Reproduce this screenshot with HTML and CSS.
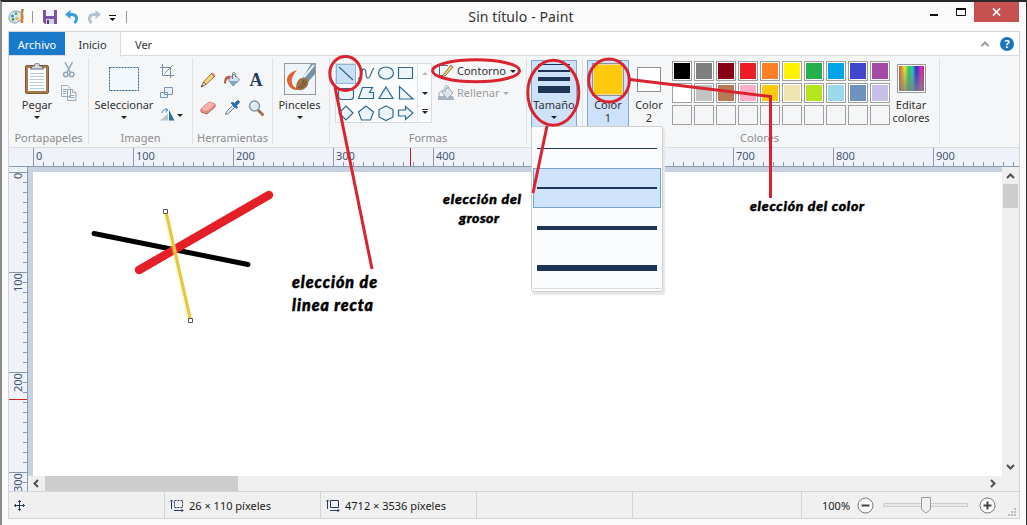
FILE: index.html
```
<!DOCTYPE html>
<html lang="es">
<head>
  <meta charset="UTF-8" />
  <title>Sin título - Paint</title>
  <link rel="stylesheet" href="styles.css">
</head>
<body>
  <div class="window">
    <header class="titlebar">
      <div class="quick">
        <svg class="app-icon" width="18" height="18" viewBox="0 0 18 18">
          <path d="M8 3C3 3 1 7 1 10s3 5 6 5c3 0 2-2 4-2s4-1 4-4-3-6-7-6z" fill="#d5e8ef" stroke="#7597a8"/>
          <circle cx="4.500" cy="8" r="1.500" fill="#3a8fd0"/><circle cx="8" cy="5.700" r="1.400" fill="#63ad45"/>
          <circle cx="5" cy="11.500" r="1.400" fill="#46a04b"/><circle cx="9" cy="10.500" r="1.600" fill="#e7b43a"/>
          <path d="M14 6v9" stroke="#d67b32" stroke-width="2.500"/><path d="M13 1h3l-1 5h-2z" fill="#b98756"/>
        </svg>
        <i class="bar"></i>
        <svg class="save" width="14" height="14" viewBox="0 0 14 14">
          <path d="M0 0h14v14H2l-2-2z" fill="#7953a5"/><path d="M3 0h8v6H3z" fill="#f3effa"/>
          <path d="M3 9h8v5H3z" fill="#d7d2df"/><path d="M4 10h2v4H4z" fill="#563b7a"/>
        </svg>
        <svg class="undo" width="14" height="14" viewBox="0 0 14 14">
          <path d="M2 4.500h5c5 0 6 5 2.500 8.500" fill="none" stroke="#3c9fda" stroke-width="3"/><path d="M5.500 0v9L0 4.500z" fill="#3c9fda"/>
        </svg>
        <svg class="redo" width="14" height="14" viewBox="0 0 14 14">
          <path d="M12 4.500H7c-5 0-6 5-2.500 8.500" fill="none" stroke="#b4c1cf" stroke-width="3"/><path d="M8.500 0v9L14 4.500z" fill="#b4c1cf"/>
        </svg>
        <svg class="more" width="8" height="7" viewBox="0 0 8 7"><path d="M0 .5h7" stroke="#111"/><path d="M.5 3h6L3.500 6z" fill="#111"/></svg>
        <i class="bar"></i>
      </div>
      <h1>Sin título - Paint</h1>
      <div class="controls">
        <svg width="38" height="20" viewBox="0 0 38 20"><path d="M1 13h8" stroke="#111" stroke-width="2"/><path d="M27.500 7v6.500h9V7z" fill="none" stroke="#111"/><path d="M27 7h10" stroke="#111" stroke-width="2"/></svg>
        <span class="close"><svg width="9" height="8" viewBox="0 0 9 8"><path d="M1 .5l7 7M8 .5l-7 7" stroke="#fff" stroke-width="1.700"/></svg></span>
      </div>
    </header>

    <div class="client">
      <nav class="tabs">
        <span class="tab file">Archivo</span>
        <span class="tab active">Inicio</span>
        <span class="tab">Ver</span>
        <svg class="collapse" width="10" height="8" viewBox="0 0 10 8"><path d="M1.500 6L5 2.500 8.500 6" fill="none" stroke="#999" stroke-width="2"/></svg>
        <span class="help">?</span>
      </nav>

      <div class="ribbon">
        <section class="group clipboard">
          <div class="tools">
            <div class="big paste">
              <svg width="26" height="32" viewBox="0 1 26 32">
                <rect x="1.500" y="3.500" width="23" height="28" rx="1.500" fill="#a9794a" stroke="#7f5a36"/>
                <rect x="4" y="6" width="18" height="23" fill="#fbfdff"/>
                <path d="M6 11.500h14M6 14.500h14M6 17.500h14M6 20.500h14M6 23.500h14M6 26.500h14" stroke="#b6cbdb"/>
                <path d="M6.500 7l2-3h2c0-4 5-4 5 0h2l2 3z" fill="#d7dade" stroke="#63676d"/>
              </svg>
              <span>Pegar</span><i class="arrow"></i>
            </div>
            <div class="small">
              <svg width="16" height="16" viewBox="0 0 16 16" fill="none" stroke="#95a7bd" stroke-width="1.500"><path d="M4 0l5.500 10.500M11.500 0L6 10.500"/><circle cx="4.800" cy="12.500" r="2.200"/><circle cx="10.700" cy="12.500" r="2.200"/></svg>
              <svg width="16" height="16" viewBox="0 0 16 16" fill="#f1f5fa" stroke="#9aabc0"><path d="M.5.500h6l3 3v8h-9zM6.500 4.500h5l3.500 3v8H6.500z"/><path d="M11.500 4.500v3H15M2 4.500h4M2 6.500h3M2 8.500h3M8.500 10.500h5M8.500 12.500h5"/></svg>
            </div>
          </div>
          <h2>Portapapeles</h2>
        </section>

        <section class="group image">
          <div class="tools">
            <div class="big">
              <svg width="32" height="32" viewBox="0 0 32 32"><rect x="1.500" y="4.500" width="29" height="23" fill="#f3f8fd" stroke="#28648f" stroke-dasharray="2 1"/></svg>
              <span>Seleccionar</span><i class="arrow"></i>
            </div>
            <div class="small">
              <svg width="14" height="14" viewBox="0 0 14 14" fill="none" stroke="#7890aa"><path d="M2.500 0v11.500H14M0 3.500h10.500V14M4.500 9.500L13 1"/></svg>
              <svg width="14" height="14" viewBox="0 0 14 14" fill="#e5f0fa" stroke="#7c96b0"><path d="M.5 6.500h7v5h-7zM4.500 1.500h8v7h-8z"/></svg>
              <div class="rotate">
                <svg width="15" height="14" viewBox="0 0 15 14"><path d="M0 12.500L8 6v6.500z" fill="#bac1c7"/><path d="M9 2v10.500h5.500z" fill="#28749e"/><path d="M2 5c0-3 3-4 5-3M5.500 0L8 2 5.500 4" fill="none" stroke="#4a89c0"/></svg>
                <i class="arrow"></i>
              </div>
            </div>
          </div>
          <h2>Imagen</h2>
        </section>

        <section class="group toolbox">
          <div class="tools grid">
            <svg viewBox="0 0 16 16"><path d="M3.500 10L12 1l3 3-9 8.500z" fill="#f4d777" stroke="#9c7538"/><path d="M11 2l1.500-1.500L15.500 3 14 5z" fill="#d58467"/><path d="M3.500 10L1 15l5-2.500z" fill="#ecd3a3" stroke="#5c5340" stroke-width=".7"/><path d="M1 15l1-2 1 1z" fill="#222"/></svg>
            <svg viewBox="0 0 16 16"><path d="M4.500 8L10 2l5.500 6L9 14z" fill="#cfe2f0" stroke="#6f8da6"/><path d="M5.500 9h9L9 14z" fill="#83a9c9"/><path d="M8.500 7V1.500c0-1.500 3-1.500 3 1V5" fill="none" stroke="#777"/><path d="M7 4C3 3 0 5 0 11l2 1c0-4 1-5 3-5z" fill="#c25945"/></svg>
            <b class="letter">A</b>
            <svg viewBox="0 0 16 16"><path d="M1 9l8-7 6 2v3l-8 7-6-2z" fill="#e5908c" stroke="#bd6862"/><path d="M1 9l6 2 8-7-6-2z" fill="#f3b4ad"/><path d="M7 11v3" stroke="#c76f6d"/></svg>
            <svg viewBox="0 0 16 16"><path d="M1.500 14.500l1-3 6-6 2 2-6 6z" fill="#dceaf5" stroke="#708698"/><path d="M7 3l2-.5 1.500 1L13 1c2-1 3 1 2 2l-2.500 2.500 1 2-1 1z" fill="#2c70ae" stroke="#2c70ae"/></svg>
            <svg viewBox="0 0 16 16"><path d="M10 10l4.500 4.500" stroke="#9b735b" stroke-width="3" stroke-linecap="round"/><circle cx="6.500" cy="6" r="5" fill="#d8eaf6" stroke="#8998a5" stroke-width="1.500"/><path d="M4 6c0-2 1-3 3-3" stroke="#fff" fill="none"/></svg>
          </div>
          <h2>Herramientas</h2>
        </section>

        <section class="group brushes">
          <div class="tools">
            <div class="big">
              <svg width="32" height="32" viewBox="0 0 32 32">
                <rect x=".5" y=".5" width="31" height="31" fill="#edf4fa" stroke="#949a9f"/>
                <path d="M13 7C5 9 1 15 4 21c3 7 10 7 15 4-5 1-10 0-11-5-1-4 1-8 5-13z" fill="#e3622f"/>
                <path d="M31 1v10l-7 8-5-5L27 1z" fill="#7991a6"/><path d="M30 2L20 14" stroke="#e9f0f6" stroke-width="2"/>
                <path d="M12 26c0-7 3-12 9-11 6 2 3 9-1 11-3 2-6 1-8 0z" fill="#9b7146"/><path d="M14 25c3-1 5-4 6-8M17 25c3-1 4-4 5-7" stroke="#6e4a2a" fill="none"/>
              </svg>
              <span>Pinceles</span><i class="arrow"></i>
            </div>
          </div>
        </section>

        <section class="group shapes">
          <div class="tools">
            <div class="gallery">
              <div class="shape-list">
                <svg class="selected" viewBox="0 0 20 20"><path d="M3 3l14 13"/></svg>
                <svg viewBox="0 0 20 20"><path d="M2 15C6 14 5 4 8 5c4 1 0 9 4 9 3 0 3-8 6-10" fill="none"/></svg>
                <svg viewBox="0 0 20 20"><ellipse cx="10" cy="9" rx="7.500" ry="6"/></svg>
                <svg viewBox="0 0 20 20"><path d="M2.500 3.500h14v11h-14z"/></svg>
                <svg viewBox="0 0 20 20"><rect x="2.500" y="4.500" width="15" height="11" rx="3"/></svg>
                <svg viewBox="0 0 20 20"><path d="M6.500 3.500h10l-3 5h4v6h-15z"/></svg>
                <svg viewBox="0 0 20 20"><path d="M10 3l7 11.500H3z"/></svg>
                <svg viewBox="0 0 20 20"><path d="M3.500 2.500v12.500H17z"/></svg>
                <svg viewBox="0 0 20 20"><path d="M10 2l7 7-7 7-7-7z"/></svg>
                <svg viewBox="0 0 20 20"><path d="M10 2l7.500 6-3 8h-9l-3-8z"/></svg>
                <svg viewBox="0 0 20 20"><path d="M10 2l7 3.500V13l-7 3.500L3 13V5.500z"/></svg>
                <svg viewBox="0 0 20 20"><path d="M2.500 6h7V2.500L17 9l-7.500 6.500V12h-7z"/></svg>
              </div>
              <div class="scroller"><i class="arrow up"></i><i class="arrow"></i><i class="arrow last"></i></div>
            </div>
            <div class="options">
              <div class="option">
                <svg width="16" height="16" viewBox="0 0 16 16"><path d="M10 2.500H1.500v10H5" fill="none" stroke="#416d9b"/><path d="M5 12l8-10 2 2-8 9-3 1z" fill="#f1d070" stroke="#8f7242"/></svg>
                <span>Contorno</span><i class="arrow"></i>
              </div>
              <div class="option disabled">
                <svg width="16" height="16" viewBox="0 0 16 16"><path d="M0 11h15l1 4H0z" fill="#a9b4c0"/><path d="M4 7l6-5 5 6-6 6z" fill="#dfe5eb" stroke="#9aa7b5"/><path d="M7 7V2c0-2 3-2 3 0v2M5 5L1 8v4" fill="none" stroke="#9aa7b5"/></svg>
                <span>Rellenar</span><i class="arrow"></i>
              </div>
            </div>
          </div>
          <h2>Formas</h2>
        </section>

        <section class="group size">
          <div class="tools">
            <div class="size-button">
              <i class="w1"></i><i class="w2"></i><i class="w3"></i><i class="w4"></i>
              <span>Tamaño</span><i class="arrow"></i>
              <div class="size-menu">
                <div class="size-item"><i class="w1"></i></div>
                <div class="size-item hover"><i class="w2"></i></div>
                <div class="size-item"><i class="w3"></i></div>
                <div class="size-item"><i class="w4"></i></div>
              </div>
            </div>
          </div>
        </section>

        <section class="group colors">
          <div class="tools">
            <div class="color-button chosen"><i></i><span>Color<br>1</span></div>
            <div class="color-button second"><i></i><span>Color<br>2</span></div>
            <div class="palette" id="palette"></div>
            <div class="edit"><i></i><span>Editar<br>colores</span></div>
          </div>
          <h2>Colores</h2>
        </section>
      </div>

      <div class="ruler-x">
        <span>0</span><span>100</span><span>200</span><span>300</span><span>400</span><span>500</span><span>600</span><span>700</span><span>800</span><span>900</span>
        <i class="marker"></i>
      </div>

      <div class="workspace">
        <div class="ruler-y">
          <span>0</span><span>100</span><span>200</span><span>300</span>
          <i class="marker"></i>
        </div>
        <div class="view">
          <main class="canvas">
            <svg width="300" height="200" viewBox="33 172 300 200">
              <path d="M94 233.500l154 31" stroke="#000" stroke-width="5" stroke-linecap="round"/>
              <path d="M139 270l130-75" stroke="#e41f27" stroke-width="8.500" stroke-linecap="round"/>
              <path d="M166 214l24 106" stroke="#ffe94a" stroke-opacity=".35" stroke-width="5"/>
              <path d="M166 212l24.500 108" stroke="#e4c645" stroke-width="3"/>
              <path d="M163.500 209.500h4v4h-4zM188.500 318.500h4v4h-4z" fill="#fff" stroke="#555"/>
            </svg>
          </main>
          <div class="scroll-x">
            <svg width="8" height="9" viewBox="0 0 8 9"><path d="M6 1L2.500 4.500 6 8" fill="none" stroke="#505050" stroke-width="2"/></svg>
            <i class="thumb"></i>
            <svg width="8" height="9" viewBox="0 0 8 9"><path d="M2 1l3.500 3.500L2 8" fill="none" stroke="#505050" stroke-width="2"/></svg>
          </div>
        </div>
        <div class="scroll-y">
          <svg width="9" height="8" viewBox="0 0 9 8"><path d="M1 6l3.500-3.500L8 6" fill="none" stroke="#505050" stroke-width="2"/></svg>
          <i class="thumb"></i>
          <svg width="9" height="8" viewBox="0 0 9 8"><path d="M1 2l3.500 3.500L8 2" fill="none" stroke="#505050" stroke-width="2"/></svg>
        </div>
      </div>

      <footer class="status">
        <div class="cell pos"><svg width="11" height="11" viewBox="0 0 11 11"><path d="M5.500 0v11M0 5.500h11M4 2l1.500-1.500L7 2M4 9l1.500 1.500L7 9M2 4L.5 5.500 2 7M9 4l1.500 1.500L9 7" fill="none" stroke="#263b5e"/></svg></div>
        <div class="cell"><svg width="14" height="13" viewBox="0 0 14 13" fill="none" stroke="#263b5e"><path d="M4.500 1.500h8v7h-8z" stroke-dasharray="2 1"/><path d="M1.500 10V1M0 2.500L1.500 1 3 2.500M4 11.500h9M11.500 10l1.500 1.500-1.500 1.500"/></svg><span>26 × 110 píxeles</span></div>
        <div class="cell"><svg width="14" height="13" viewBox="0 0 14 13" fill="none" stroke="#263b5e"><path d="M4.500 1.500h8v7h-8z"/><path d="M1.500 10V1M0 2.500L1.500 1 3 2.500M4 11.500h9M11.500 10l1.500 1.500-1.500 1.500"/></svg><span>4712 × 3536 píxeles</span></div>
        <div class="cell empty"></div>
        <div class="zoom">
          <span>100%</span>
          <svg width="17" height="17" viewBox="0 0 17 17"><circle cx="8.500" cy="8.500" r="7.500" fill="#fafafa" stroke="#777"/><path d="M4.500 8.500h8" stroke="#444" stroke-width="2"/></svg>
          <svg class="slider" width="86" height="17" viewBox="0 0 86 17"><path d="M.5 6.500h84v3H.5z" fill="#e8e8e8" stroke="#ccc"/><path d="M38.500.500h9v12L43 16l-4.500-3.500z" fill="#f0f0f0" stroke="#999"/></svg>
          <svg width="17" height="17" viewBox="0 0 17 17"><circle cx="8.500" cy="8.500" r="7.500" fill="#fafafa" stroke="#777"/><path d="M4.500 8.500h8M8.500 4.500v8" stroke="#444" stroke-width="2"/></svg>
          <svg class="grip" width="9" height="9" viewBox="0 0 9 9"><path d="M6 0h2v2H6zM6 3h2v2H6zM3 3h2v2H3zM6 6h2v2H6zM3 6h2v2H3zM0 6h2v2H0z" fill="#bdbdbd"/></svg>
        </div>
      </footer>
    </div>

    <svg class="notes" width="1027" height="525" viewBox="0 0 1027 525">
      <g class="pen">
        <ellipse cx="345.500" cy="73.500" rx="15.700" ry="17"/>
        <path d="M335 87l37 182"/>
        <ellipse cx="476" cy="70.700" rx="43.500" ry="11"/>
        <ellipse cx="553.300" cy="92.700" rx="25.500" ry="32.500"/>
        <path d="M547 126l-14 67"/>
        <ellipse cx="609" cy="80.500" rx="20.300" ry="21.500"/>
        <path d="M630 79.500l140.500 17V198"/>
      </g>
      <g class="hand">
        <text class="large" x="292" y="288" textLength="85">elección de</text>
        <text class="large" x="292" y="311" textLength="81">linea recta</text>
        <text x="443" y="204" textLength="78">elección del</text>
        <text x="459" y="223" textLength="40">grosor</text>
        <text x="750" y="211" textLength="114">elección del color</text>
      </g>
    </svg>
  </div>

  <script>
    const COLORS = [
      "#000000", "#7f7f7f", "#880015", "#ed1c24", "#ff7f27", "#fff200", "#22b14c", "#00a2e8", "#3f48cc", "#a349a4",
      "#ffffff", "#c3c3c3", "#b97a57", "#ffaec9", "#ffc90e", "#efe4b0", "#b5e61d", "#99d9ea", "#7092be", "#c8bfe7"
    ];
    const palette = document.getElementById("palette");

    for (let i = 0; i < 30; i++) {
      const swatch = document.createElement("i");
      if (COLORS[i]) {
        swatch.style.backgroundColor = COLORS[i];
      } else {
        swatch.className = "free";
      }
      palette.appendChild(swatch);
    }
  </script>
</body>
</html>
```
FILE: styles.css
```
* {
  box-sizing: border-box;
}

body {
  margin: 0;
  font-family: "Noto Sans", "Open Sans", sans-serif;
  font-size: 11px;
  color: #333;
  overflow: hidden;
}

svg {
  display: block;
  flex: none;
}

i {
  display: block;
  flex: none;
}

.window {
  position: relative;
  width: 1027px;
  height: 525px;
  padding: 0 7px 0 6px;
  background: #fbfbfb;
  border: solid #2b292c;
  border-width: 2px 1px 0 2px;
  border-left-color: #8b8b8b;
}

/* title bar */
.titlebar {
  display: flex;
  height: 29px;
  justify-content: space-between;
}

.quick {
  display: flex;
  align-items: center;
  width: 130px;
}

.bar {
  width: 1px;
  height: 12px;
  background: #999;
}

.app-icon {
  margin-right: 6px;
}

.save {
  margin-left: 10px;
}

.undo {
  margin-left: 8px;
}

.redo {
  margin-left: 8px;
}

.more {
  margin: 4px 9px 0 8px;
}

h1 {
  margin: 0 25px 0 0;
  font-size: 14px;
  font-weight: 400;
  line-height: 29px;
  letter-spacing: 0.100px;
}

.controls {
  display: flex;
  width: 90px;
}

.close {
  display: flex;
  align-items: center;
  justify-content: center;
  width: 45px;
  height: 20px;
  margin-left: 7px;
  background: #c75050;
}

.client {
  width: 1012px;
  border: 1px solid #d3d4d6;
}

/* tabs */
.tabs {
  display: flex;
  height: 24px;
  background: #fff;
  border-bottom: 1px solid #dadbdc;
  align-items: center;
}

.tab {
  height: 23px;
  padding: 0 14px;
  line-height: 25px;
}

.file {
  width: 56px;
  padding: 0;
  text-align: center;
  background: #1979ca;
  color: #fff;
}

.active {
  width: 56px;
  height: 25px;
  margin-top: 1px;
  padding: 0;
  text-align: center;
  background: #f5f6f7;
  border-right: 1px solid #dadbdc;
}

.collapse {
  margin-left: auto;
}

.help {
  width: 14px;
  height: 14px;
  margin: 0 5px 0 10px;
  border-radius: 50%;
  background: #1c74bd;
  color: #fff;
  font-weight: 700;
  line-height: 14px;
  text-align: center;
}

/* ribbon */
.ribbon {
  display: flex;
  height: 91px;
  padding: 2px 0 3px;
  background: #f5f6f7;
}

.group {
  display: flex;
  flex-direction: column;
  flex: none;
  border-right: 1px solid #e0e1e3;
}

.tools {
  display: flex;
  height: 71px;
}

h2 {
  margin: 0;
  height: 14px;
  font-size: 11px;
  font-weight: 400;
  line-height: 18px;
  text-align: center;
  color: #8b8c8e;
}

.clipboard { width: 80px; }
.image { width: 104px; }
.toolbox { width: 80px; }
.brushes { width: 57px; }
.shapes { width: 197px; }
.size { width: 56px; }
.colors { width: 357px; }

.arrow {
  width: 0;
  height: 0;
  border: 3px solid transparent;
  border-top-color: #222;
  border-bottom: 0;
}

.arrow.up {
  border-top: 0;
  border-bottom: 3px solid #bbb;
}

.big {
  display: flex;
  flex-direction: column;
  align-items: center;
  width: 54px;
  padding-top: 5px;
}

.big span {
  line-height: 20px;
}

.big .arrow {
  margin-top: 1px;
}

.paste {
  width: 56px;
}

.small {
  display: flex;
  flex-direction: column;
}

.clipboard .small {
  gap: 7px;
  margin-left: -4px;
  padding-top: 4px;
}

.image .big {
  width: 70px;
}

.image .small {
  gap: 8px;
  padding: 6px 0 0 1px;
}

.rotate {
  display: flex;
  align-items: center;
  gap: 2px;
}

.grid {
  display: grid;
  grid-template-columns: 16px 16px 16px;
  grid-auto-rows: 16px;
  gap: 12px 8px;
  padding: 14px 0 0 7px;
}

.letter {
  font: 700 18px/16px "Liberation Serif", serif;
  color: #1f3c5f;
  text-align: center;
}

.brushes .big {
  width: 53px;
}

.gallery {
  display: flex;
  width: 97px;
  height: 60px;
  margin: 5px 0 0 5px;
  background: #fbfcfe;
  border: 1px solid #dadbdd;
}

.shape-list {
  display: grid;
  grid-template-columns: repeat(4, 20px);
  grid-auto-rows: 20px;
  width: 81px;
  height: 60px;
}

.shape-list svg {
  fill: #edf6fc;
  stroke: #31678f;
  stroke-width: 1.200;
}

.shape-list .selected {
  background: #c9e0f7;
  box-shadow: inset 0 0 0 1px #8fb6da;
}

.scroller {
  display: flex;
  flex: 1;
  flex-direction: column;
  align-items: center;
  justify-content: space-between;
  padding: 8px 0;
  border-left: 1px solid #e3e4e6;
}

.scroller .last {
  position: relative;
}

.scroller .last::before {
  content: "";
  position: absolute;
  top: -5px;
  left: -3px;
  width: 6px;
  height: 1px;
  background: #333;
}

.options {
  display: flex;
  flex-direction: column;
  gap: 6px;
  padding: 5px 0 0 6px;
}

.option {
  display: flex;
  align-items: center;
  height: 16px;
}

.option span {
  margin: -1px 4px 0 3px;
}

.disabled {
  color: #9a9b9d;
}

.disabled .arrow {
  border-top-color: #aaa;
}

/* line size */
.size-button {
  position: relative;
  display: flex;
  flex-direction: column;
  align-items: center;
  width: 46px;
  height: 67px;
  margin: 2px 0 0 4px;
  padding-top: 3px;
  background: #cde2f9;
  border: 1px solid #7fabd0;
}

.size-button > .w1,
.size-button > .w2,
.size-button > .w3,
.size-button > .w4 {
  width: 32px;
  margin-bottom: 5px;
}

.w1 { height: 1px; background: #1d3557; }
.w2 { height: 2px; background: #1d3557; }
.w3 { height: 4px; background: #1d3557; }
.w4 { height: 7px; background: #1d3557; }

.size-button > .w4 {
  margin-bottom: 2px;
}

.size-button span {
  line-height: 20px;
}

.size-button > .arrow {
  margin-top: 1px;
}

.size-menu {
  position: absolute;
  z-index: 1;
  top: 65px;
  left: -1px;
  width: 132px;
  height: 166px;
  padding: 1px;
  background: #fbfcfe;
  border: 1px solid #cdced0;
  border-radius: 2px;
  box-shadow: 2px 3px 1px #e7e7e8;
}

.size-menu::after {
  content: "";
  display: block;
  height: 1px;
  background: #dadbdc;
}

.size-item {
  display: flex;
  align-items: center;
  justify-content: center;
  height: 40px;
  border: 1px solid transparent;
}

.size-item.hover {
  background: #cfe4fa;
  border-color: #74a5c9;
}

.size-item i {
  width: 120px;
}

.size-item .w4 {
  height: 6px;
}

/* colors */
.color-button {
  display: flex;
  flex-direction: column;
  align-items: center;
  width: 42px;
  height: 67px;
  margin: 2px 1px 0 4px;
  border: 1px solid transparent;
  line-height: 13px;
  text-align: center;
}

.color-button.chosen {
  background: #cde2f9;
  border-color: #7fabd0;
}

.color-button i {
  width: 32px;
  height: 33px;
  margin: 2px 0;
  background: #ffc90e;
  border: 1px solid #909090;
  box-shadow: inset 0 0 0 1px #e9dcab;
}

.color-button.second {
  width: 38px;
  margin-left: 0;
}

.second i {
  width: 24px;
  height: 25px;
  margin: 6px 0;
  background: #fff;
  box-shadow: none;
}

.palette {
  display: grid;
  grid-template-columns: repeat(10, 20px);
  grid-auto-rows: 20px;
  gap: 2px;
  margin: 3px 0 0 3px;
}

.palette i {
  border: 1px solid #a0a0a0;
  box-shadow: inset 0 0 0 1px #fff;
}

.palette .free {
  box-shadow: none;
}

.edit {
  width: 42px;
  padding-top: 6px;
  line-height: 13px;
  text-align: center;
}

.edit i {
  width: 29px;
  height: 29px;
  margin: 0 auto 5px;
  border: 1px solid #999;
  box-shadow: inset 0 0 0 1px #fff;
  background: linear-gradient(transparent, rgba(128, 128, 128, 0.850)), linear-gradient(90deg, #d33, #ee3 25%, #2c4 40%, #2cc 53%, #22c 68%, #d2c 85%, #c23);
}

.colors h2 {
  padding-right: 3px;
}

/* rulers */
.ruler-x {
  position: relative;
  display: flex;
  height: 20px;
  padding-left: 24px;
  border-top: 1px solid #dadbdc;
  border-bottom: 1px solid #8d9bb1;
  background:
    repeating-linear-gradient(90deg, #8797ad 0 1px, transparent 1px 10px) 24px 14px / 100% 4px no-repeat,
    #f0f2f9;
  overflow: hidden;
}

.ruler-x span {
  flex: none;
  width: 100px;
  padding-left: 2px;
  border-left: 1px solid #8797ad;
  line-height: 15px;
  color: #46566f;
}

.ruler-x .marker {
  position: absolute;
  left: 401px;
  width: 1px;
  height: 18px;
  background: #b3202c;
}

.workspace {
  display: flex;
  height: 324px;
}

.ruler-y {
  position: relative;
  width: 19px;
  padding-top: 5px;
  border-right: 1px solid #8d9bb1;
  background:
    repeating-linear-gradient(#8797ad 0 1px, transparent 1px 10px) 14px 5px / 4px 100% no-repeat,
    #f0f2f9;
  overflow: hidden;
}

.ruler-y span {
  display: block;
  height: 100px;
  border-bottom: 1px solid #8797ad;
  writing-mode: vertical-rl;
  transform: rotate(180deg);
  text-align: right;
  line-height: 17px;
  color: #46566f;
}

.ruler-y .marker {
  position: absolute;
  z-index: 1;
  top: 232px;
  left: 0;
  width: 18px;
  height: 1px;
  background: #d0202c;
}

.view {
  width: 974px;
}

.canvas {
  height: 309px;
  background: #fff;
  border: solid #c8d1e2;
  border-width: 5px 0 0 5px;
}

.scroll-x {
  display: flex;
  align-items: center;
  height: 15px;
  padding: 0 5px 0 4px;
  background: #efefef;
}

.scroll-x .thumb {
  width: 193px;
  height: 15px;
  margin: 0 auto 0 5px;
  background: #cdcdcd;
}

.scroll-y {
  display: flex;
  flex-direction: column;
  align-items: center;
  width: 17px;
  padding: 5px 0 20px;
  background: #efefef;
}

.scroll-y .thumb {
  width: 15px;
  height: 24px;
  margin: 4px 0 auto;
  background: #cdcdcd;
}

/* status bar */
.status {
  display: flex;
  height: 27px;
  background: #f0f0f0;
  border-top: 1px solid #d3d4d6;
  color: #1b1b1b;
}

.cell {
  display: flex;
  align-items: center;
  width: 156px;
  padding-left: 5px;
  border-right: 1px solid #d3d4d6;
}

.cell span {
  margin-left: 5px;
}

.zoom {
  display: flex;
  flex: 1;
  align-items: center;
  margin-left: 168px;
  border-left: 1px solid #d3d4d6;
  padding-left: 20px;
}

.zoom span {
  width: 35px;
}

.slider {
  margin: 0 10px 0 9px;
}

.grip {
  margin: 14px 0 0 12px;
}

/* handwritten notes on top of the window */
.notes {
  position: absolute;
  z-index: 2;
  top: -2px;
  left: -2px;
}

.pen {
  fill: none;
  stroke: #d9232e;
  stroke-width: 3;
}

.hand {
  font: italic 900 14px Lato, sans-serif;
  fill: #000;
  stroke: #000;
  stroke-width: 0.500;
}

.hand .large {
  font-size: 16px;
}
```
